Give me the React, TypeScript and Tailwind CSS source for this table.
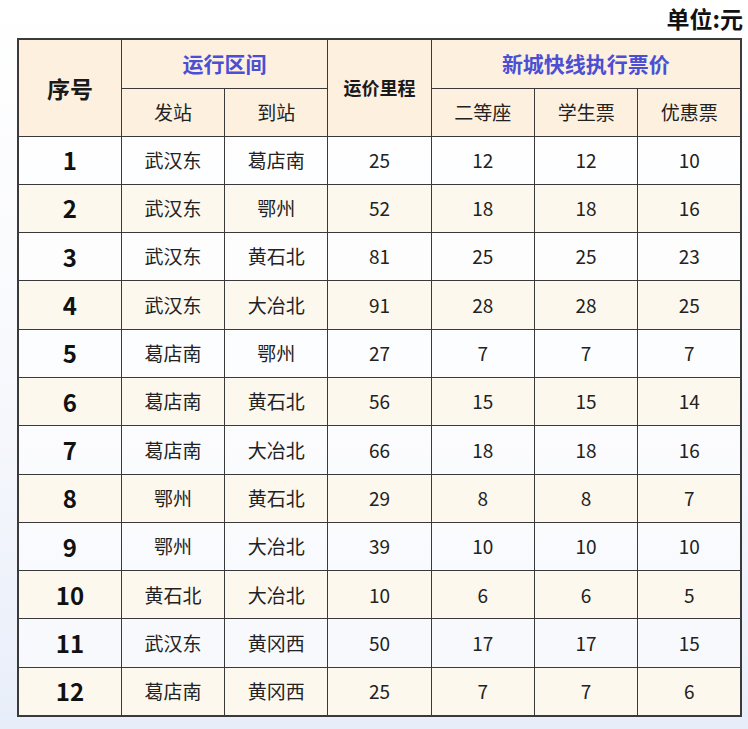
const rows = [
  ["1", "武汉东", "葛店南", "25", "12", "12", "10"],
  ["2", "武汉东", "鄂州", "52", "18", "18", "16"],
  ["3", "武汉东", "黄石北", "81", "25", "25", "23"],
  ["4", "武汉东", "大冶北", "91", "28", "28", "25"],
  ["5", "葛店南", "鄂州", "27", "7", "7", "7"],
  ["6", "葛店南", "黄石北", "56", "15", "15", "14"],
  ["7", "葛店南", "大冶北", "66", "18", "18", "16"],
  ["8", "鄂州", "黄石北", "29", "8", "8", "7"],
  ["9", "鄂州", "大冶北", "39", "10", "10", "10"],
  ["10", "黄石北", "大冶北", "10", "6", "6", "5"],
  ["11", "武汉东", "黄冈西", "50", "17", "17", "15"],
  ["12", "葛店南", "黄冈西", "25", "7", "7", "6"],
];

const cell = "border border-[#3a3a3a] text-center align-middle p-0";

export default function App() {
  return (
    <div
      className="w-[748px] h-[729px] bg-gradient-to-b from-white via-[#f8f9fd] to-[#e8eef9] text-[#222]"
      style={{ fontFamily: '"Noto Sans CJK SC", "Noto Sans", sans-serif' }}
    >
      {/* unit label */}
      <div className="flex justify-end pr-[5px] pt-[3px] h-[38px]">
        <span className="text-[23px] font-bold leading-[30px] text-[#111]">单位:元</span>
      </div>

      <div className="pl-[17px]">
        <table className="w-[723px] table-fixed border-collapse border-2 border-[#3a3a3a]">
          <colgroup>
            {[0, 1, 2, 3, 4, 5, 6].map((i) => (
              <col key={i} className="w-[103.3px]" />
            ))}
          </colgroup>
          <thead>
            <tr className="h-[49px] bg-[#fdf0df]">
              <th rowSpan={2} className={`${cell} text-[23px] font-bold text-[#1a1a1a]`}>
                序号
              </th>
              <th colSpan={2} className={`${cell} text-[21px] font-bold text-[#4a4fd3]`}>
                运行区间
              </th>
              <th rowSpan={2} className={`${cell} text-[18px] font-bold text-[#1a1a1a]`}>
                运价里程
              </th>
              <th colSpan={3} className={`${cell} text-[21px] font-bold text-[#4a4fd3]`}>
                新城快线执行票价
              </th>
            </tr>
            <tr className="h-[48px] bg-[#fdf0df] text-[19px]">
              <th className={`${cell} font-normal`}>发站</th>
              <th className={`${cell} font-normal`}>到站</th>
              <th className={`${cell} font-normal`}>二等座</th>
              <th className={`${cell} font-normal`}>学生票</th>
              <th className={`${cell} font-normal`}>优惠票</th>
            </tr>
          </thead>
          <tbody>
            {rows.map((r, i) => (
              <tr
                key={r[0]}
                className={`h-[48.3px] ${i % 2 === 1 ? "bg-[#fdf8ee]" : "bg-white/60"}`}
              >
                <td className={`${cell} text-[24px] font-bold text-[#111]`}>{r[0]}</td>
                {r.slice(1).map((v, j) => (
                  <td key={j} className={`${cell} text-[19px]`}>
                    {v}
                  </td>
                ))}
              </tr>
            ))}
          </tbody>
        </table>
      </div>
    </div>
  );
}
